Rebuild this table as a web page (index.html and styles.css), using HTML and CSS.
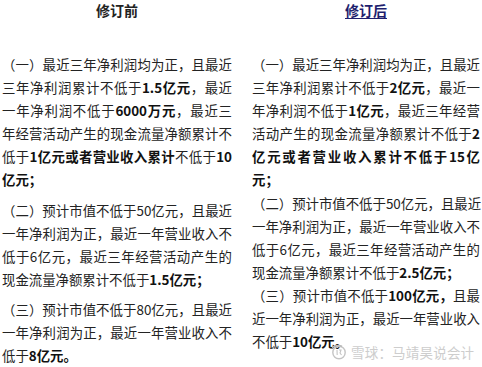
FILE: index.html
```html
<!DOCTYPE html>
<html lang="zh">
<head>
<meta charset="utf-8">
<link rel="stylesheet" href="styles.css">
</head>
<body>
<div class="page">
  <div class="grid">
    <div class="head">修订前</div>
    <div class="head link">修订后</div>
    <div class="col left">
      <p class="para">
        <span class="ln">（一）最近三年净利润均为正，且最近</span>
        <span class="ln">三年净利润累计不低于<b>1.5亿元</b>，最近</span>
        <span class="ln">一年净利润不低于<b>6000万元</b>，最近三</span>
        <span class="ln">年经营活动产生的现金流量净额累计不</span>
        <span class="ln">低于<b>1亿元或者营业收入累计</b>不低于<b>10</b></span>
        <span class="ln end"><b>亿元；</b></span>
      </p>
      <p class="para">
        <span class="ln">（二）预计市值不低于50亿元，且最近</span>
        <span class="ln">一年净利润为正，最近一年营业收入不</span>
        <span class="ln">低于6亿元，最近三年经营活动产生的</span>
        <span class="ln end">现金流量净额累计不低于<b>1.5亿元；</b></span>
      </p>
      <p class="para">
        <span class="ln">（三）预计市值不低于80亿元，且最近</span>
        <span class="ln">一年净利润为正，最近一年营业收入不</span>
        <span class="ln end">低于<b>8亿元。</b></span>
      </p>
    </div>
    <div class="col right">
      <p class="para">
        <span class="ln">（一）最近三年净利润均为正，且最近</span>
        <span class="ln">三年净利润累计不低于<b>2亿元</b>，最近一</span>
        <span class="ln">年净利润不低于<b>1亿元</b>，最近三年经营</span>
        <span class="ln">活动产生的现金流量净额累计不低于<b>2</b></span>
        <span class="ln"><b>亿元或者营业收入累计不低于15亿</b></span>
        <span class="ln end"><b>元；</b></span>
      </p>
      <p class="para">
        <span class="ln">（二）预计市值不低于50亿元，且最近</span>
        <span class="ln">一年净利润为正，最近一年营业收入不</span>
        <span class="ln">低于6亿元，最近三年经营活动产生的</span>
        <span class="ln end">现金流量净额累计不低于<b>2.5亿元；</b></span>
      </p>
      <p class="para">
        <span class="ln">（三）预计市值不低于<b>100亿元，</b>且最</span>
        <span class="ln">近一年净利润为正，最近一年营业收入</span>
        <span class="ln end">不低于<b>10亿元。</b></span>
      </p>
    </div>
  </div>
  <div class="mark">
    <svg class="mark-logo" width="16" height="16" viewBox="0 0 16 16">
      <circle cx="8" cy="8.5" r="6.2" fill="none" stroke="#c4c4c4" stroke-width="1.4"/>
      <path d="M1 3.5 C4 1.5 8 1.2 11 2.2" fill="none" stroke="#b8b8b8" stroke-width="1.6"/>
      <path d="M6 6 L6.2 11 M8 6 L10 6 L9 9 L10.5 11" fill="none" stroke="#c4c4c4" stroke-width="1.1"/>
    </svg>
    <span class="mark-text">雪球：马靖昊说会计</span>
  </div>
</div>
</body>
</html>
```
FILE: styles.css
```css
html, body {
  margin: 0;
  padding: 0;
  background: #ffffff;
}
.page {
  position: relative;
  width: 482px;
  height: 367px;
  overflow: hidden;
  font-family: "Noto Sans CJK SC", "Microsoft YaHei", sans-serif;
  color: #232323;
}
.grid {
  display: grid;
  grid-template-columns: 230px 228px;
  column-gap: 20px;
  padding-left: 2px;
}
.head {
  font-size: 14px;
  font-weight: 700;
  line-height: 21px;
  text-align: center;
  color: #222;
  margin-bottom: 32px;
}
.head.link {
  color: #1e1e6e;
  text-decoration: underline;
  text-underline-offset: 2px;
}
.col {
  font-size: 13.4px;
  line-height: 23.1px;
}
.para {
  margin: 0;
}
.left .para + .para {
  margin-top: 7px;
}
.ln {
  display: block;
  white-space: nowrap;
  text-align: justify;
  text-align-last: justify;
}
.ln.end {
  text-align-last: left;
}
b {
  font-weight: 700;
  color: #111;
}
.mark {
  position: absolute;
  left: 331px;
  top: 344px;
  display: flex;
  align-items: center;
  gap: 4px;
}
.mark-text {
  font-family: "Noto Sans CJK SC", sans-serif;
  font-size: 13.5px;
  line-height: 16px;
  color: #cdcdcd;
  letter-spacing: 0.2px;
  text-shadow: 0 0 1px #fff;
}
```
